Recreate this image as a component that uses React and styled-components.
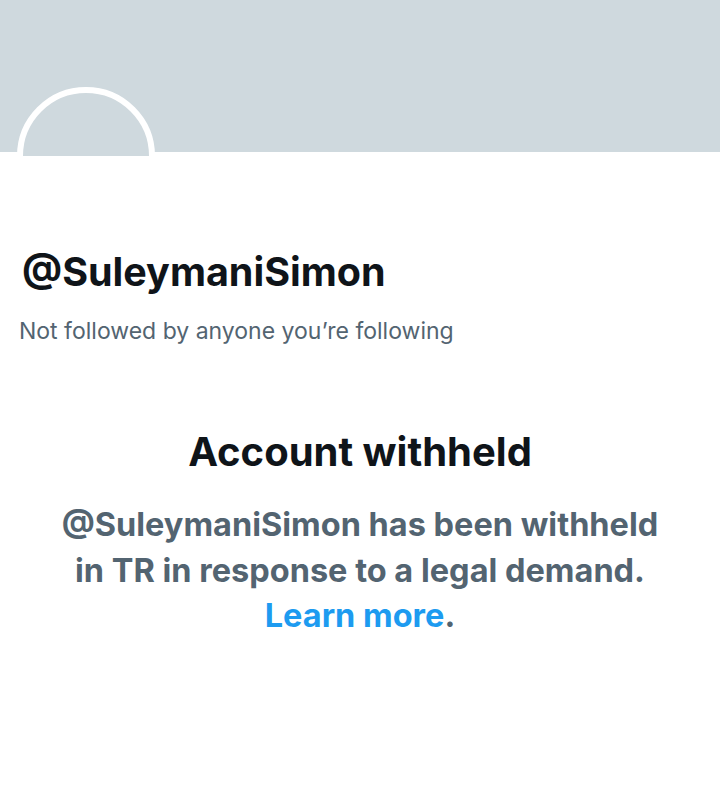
import React from 'react';
import styled, { createGlobalStyle } from 'styled-components';

const GlobalStyle = createGlobalStyle`
  html, body {
    margin: 0;
    padding: 0;
    background: #ffffff;
  }
  body {
    font-family: Inter, "Liberation Sans", Arial, sans-serif;
    -webkit-font-smoothing: antialiased;
  }
`;

const Page = styled.div`
  width: 720px;
  height: 791px;
  background: #ffffff;
  overflow: hidden;
`;

const Banner = styled.div`
  height: 152px;
  background: #cfd9de;
`;

const AvatarRow = styled.div`
  position: relative;
  height: 0;
`;

const Avatar = styled.div`
  position: absolute;
  left: 17px;
  top: -65px;
  width: 126px;
  height: 126px;
  border: 6px solid #ffffff;
  border-radius: 50%;
  background: #cfd9de;
  clip-path: inset(0 0 50% 0);
`;

const Profile = styled.div`
  padding: 96px 19px 0;
`;

const Handle = styled.h1`
  margin: 0;
  font-size: 39.5px;
  font-weight: 700;
  color: #0f1419;
  line-height: 48px;
  padding-left: 3px;
`;

const Subline = styled.p`
  margin: 20px 0 0;
  font-size: 23px;
  color: #536471;
  line-height: 30px;
`;

const Notice = styled.section`
  margin-top: 82px;
  text-align: center;
`;

const NoticeTitle = styled.h2`
  margin: 0;
  font-size: 40px;
  font-weight: 700;
  color: #0f1419;
  line-height: 48px;
`;

const NoticeText = styled.p`
  margin: 26px 0 0;
  font-size: 32.5px;
  font-weight: 700;
  color: #536471;
  line-height: 45.5px;
`;

const Link = styled.a`
  color: #1d9bf0;
  text-decoration: none;
`;

export default function App() {
  return (
    <Page>
      <GlobalStyle />
      <Banner />
      <AvatarRow>
        <Avatar />
      </AvatarRow>
      <Profile>
        <Handle>@SuleymaniSimon</Handle>
        <Subline>Not followed by anyone you’re following</Subline>
      </Profile>
      <Notice>
        <NoticeTitle>Account withheld</NoticeTitle>
        <NoticeText>
          @SuleymaniSimon has been withheld
          <br />
          in TR in response to a legal demand.
          <br />
          <Link href="#">Learn more</Link>.
        </NoticeText>
      </Notice>
    </Page>
  );
}
